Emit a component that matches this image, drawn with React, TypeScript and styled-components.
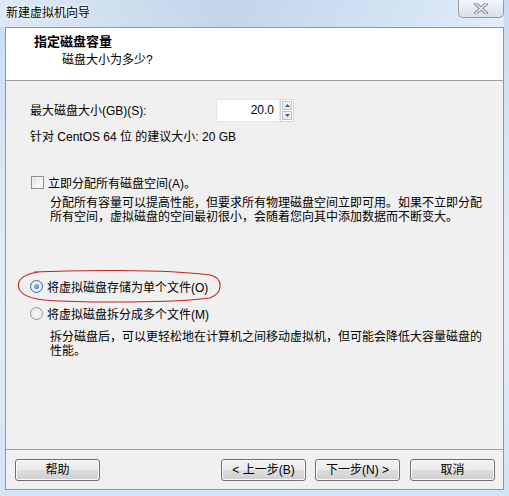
import React from "react";
import styled, { createGlobalStyle } from "styled-components";

const Global = createGlobalStyle`
  html, body { margin: 0; padding: 0; background: #dfeaf5; }
  body { width: 509px; height: 496px; overflow: hidden; font-family: "Liberation Sans", "Noto Sans CJK SC", sans-serif; font-size: 12px; color: #000; }
  * { box-sizing: border-box; }
`;

const Window = styled.div`
  width: 509px;
  height: 496px;
  display: flex;
  flex-direction: column;
  padding: 0 5px 6px 5px;
  background: linear-gradient(180deg, #c8dcf1 0%, #d8e6f4 30%, #e4eef8 60%, #d3e4f4 100%);
`;

const TitleBar = styled.div`
  height: 27px;
  display: flex;
  align-items: flex-start;
  justify-content: space-between;
  flex-shrink: 0;
  margin-left: -5px;
  background: linear-gradient(90deg, rgba(255,255,255,0.35) 0%, rgba(180,190,205,0.25) 45%, rgba(255,255,255,0.2) 80%, rgba(255,255,255,0.45) 100%);
`;

const Title = styled.div`
  padding-left: 6px;
  padding-top: 5px;
  line-height: 16px;
  font-size: 12px;
  color: #000;
  text-shadow: 0 0 6px #ffffff, 0 0 3px #ffffff;
`;

const CloseButton = styled.div`
  width: 46px;
  height: 18px;
  border: 1px solid #8e9bab;
  border-top: none;
  border-radius: 0 0 5px 5px;
  background: linear-gradient(180deg, #f4f7fb 0%, #e3eaf2 50%, #d6e0ea 100%);
  display: flex;
  align-items: center;
  justify-content: center;
`;

const Client = styled.div`
  flex: 1;
  display: flex;
  flex-direction: column;
  border: 1px solid #8b98a8;
  background: #f0f0f0;
  min-height: 0;
`;

const Header = styled.div`
  height: 53px;
  flex-shrink: 0;
  background: #ffffff;
  border-bottom: 1px solid #a0a0a0;
  padding: 6px 0 0 28px;
`;

const HeaderTitle = styled.div`
  font-weight: bold;
  font-size: 13px;
  line-height: 16px;
`;

const HeaderSub = styled.div`
  padding-left: 28px;
  margin-top: 2px;
  line-height: 16px;
`;

const Content = styled.div`
  flex: 1;
  position: relative;
  padding: 18px 0 0 24px;
`;

const SizeRow = styled.div`
  display: flex;
  align-items: center;
  height: 23px;
`;

const SizeLabel = styled.div`
  width: 186px;
  line-height: 14px;
`;

const Spinner = styled.div`
  display: flex;
  height: 23px;
`;

const SpinInput = styled.div`
  width: 64px;
  height: 23px;
  background: #ffffff;
  border: 1px solid #e6e6e6;
  text-align: right;
  padding-right: 5px;
  line-height: 21px;
  font-size: 12px;
`;

const SpinArrows = styled.div`
  width: 14px;
  display: flex;
  flex-direction: column;
  border: 1px solid #d2d6dc;
  background: #ffffff;
  padding: 1px;
  gap: 1px;
`;

const SpinArrow = styled.div`
  flex: 1;
  border: 1px solid #b8c4d2;
  background: linear-gradient(180deg, #f3f6fa, #e2e8f0);
  display: flex;
  align-items: center;
  justify-content: center;
`;

const Text = styled.div<{ $mt?: number }>`
  line-height: 14px;
  margin-top: ${(p) => p.$mt ?? 0}px;
`;

const OptionRow = styled.div<{ $mt: number; $pl?: number }>`
  display: flex;
  align-items: center;
  height: 14px;
  margin-top: ${(p) => p.$mt}px;
  gap: 4px;
  padding-left: ${(p) => p.$pl ?? 0}px;
`;

const CheckBox = styled.div`
  width: 13px;
  height: 13px;
  border: 1px solid #8f8f8f;
  background: linear-gradient(135deg, #dcdcdc 0%, #f4f4f4 60%, #ffffff 100%);
  box-shadow: inset 0 0 0 1px #f4f4f4;
`;

const Radio = styled.div<{ $checked?: boolean }>`
  width: 13px;
  height: 13px;
  border-radius: 50%;
  border: 1px solid ${(p) => (p.$checked ? "#3c6a9c" : "#9a9a9a")};
  background: radial-gradient(circle at 50% 50%, #f8f8f8 0%, #e2e2e2 100%);
  display: flex;
  align-items: center;
  justify-content: center;
`;

const RadioDot = styled.div`
  width: 5px;
  height: 5px;
  border-radius: 50%;
  background: radial-gradient(circle at 40% 40%, #8fd1ff 0%, #1c5fb0 100%);
`;

const Desc = styled.div<{ $mt: number }>`
  margin-top: ${(p) => p.$mt}px;
  padding-left: 20px;
  display: flex;
  flex-direction: column;
`;

const DescLine = styled.div`
  height: 14px;
  line-height: 14px;
  white-space: nowrap;
`;

const Annotation = styled.svg`
  position: absolute;
  left: 8px;
  top: 188px;
  pointer-events: none;
`;

const Footer = styled.div`
  height: 40px;
  flex-shrink: 0;
  border-top: 1px solid #a0a0a0;
  display: flex;
  align-items: center;
  padding: 0 8px 0 9px;
  gap: 9px;
`;

const Spacer = styled.div`
  flex: 1;
`;

const Button = styled.div`
  width: 85px;
  height: 22px;
  border: 1px solid #707070;
  border-radius: 3px;
  background: linear-gradient(180deg, #f2f2f2 0%, #ebebeb 48%, #dddddd 52%, #cfcfcf 100%);
  box-shadow: inset 0 0 0 1px #fbfbfb;
  display: flex;
  align-items: center;
  justify-content: center;
  line-height: 14px;
  font-size: 12px;
`;

const Tri = ({ up }: { up?: boolean }) => (
  <svg width="5" height="3" viewBox="0 0 5 3">
    <path d={up ? "M0 3 L2.5 0 L5 3 Z" : "M0 0 L2.5 3 L5 0 Z"} fill="#4d5a6a" />
  </svg>
);

export default function App() {
  return (
    <>
      <Global />
      <Window>
        <TitleBar>
          <Title>新建虚拟机向导</Title>
          <CloseButton>
            <svg width="14" height="11" viewBox="0 0 14 11">
              <path d="M2 1 L12 10 M12 1 L2 10" stroke="#7d8794" strokeWidth="3.4" strokeLinecap="square" />
              <path d="M2 1 L12 10 M12 1 L2 10" stroke="#f4f6f9" strokeWidth="1.4" strokeLinecap="square" />
            </svg>
          </CloseButton>
        </TitleBar>
        <Client>
          <Header>
            <HeaderTitle>指定磁盘容量</HeaderTitle>
            <HeaderSub>磁盘大小为多少?</HeaderSub>
          </Header>
          <Content>
            <SizeRow>
              <SizeLabel>最大磁盘大小(GB)(S):</SizeLabel>
              <Spinner>
                <SpinInput>20.0</SpinInput>
                <SpinArrows>
                  <SpinArrow><Tri up /></SpinArrow>
                  <SpinArrow><Tri /></SpinArrow>
                </SpinArrows>
              </Spinner>
            </SizeRow>
            <Text $mt={8}>针对 CentOS 64 位 的建议大小: 20 GB</Text>
            <OptionRow $mt={31} $pl={1}>
              <CheckBox />
              <span>立即分配所有磁盘空间(A)。</span>
            </OptionRow>
            <Desc $mt={7}>
              <DescLine>分配所有容量可以提高性能，但要求所有物理磁盘空间立即可用。如果不立即分配</DescLine>
              <DescLine>所有空间，虚拟磁盘的空间最初很小，会随着您向其中添加数据而不断变大。</DescLine>
            </Desc>
            <OptionRow $mt={55}>
              <Radio $checked>
                <RadioDot />
              </Radio>
              <span>将虚拟磁盘存储为单个文件(O)</span>
            </OptionRow>
            <OptionRow $mt={13}>
              <Radio />
              <span>将虚拟磁盘拆分成多个文件(M)</span>
            </OptionRow>
            <Desc $mt={10}>
              <DescLine>拆分磁盘后，可以更轻松地在计算机之间移动虚拟机，但可能会降低大容量磁盘的</DescLine>
              <DescLine>性能。</DescLine>
            </Desc>
            <Annotation width="210" height="36" viewBox="0 0 210 36">
              <path
                d="M20 3 C60 1, 150 0, 196 6 C210 9, 209 24, 196 29 C160 34, 70 34, 30 31 C10 29, 2 22, 5 13 C8 6, 16 4, 26 3"
                fill="none"
                stroke="#c81e1e"
                strokeWidth="1.1"
              />
            </Annotation>
          </Content>
          <Footer>
            <Button>帮助</Button>
            <Spacer />
            <Button>&lt; 上一步(B)</Button>
            <Button>下一步(N) &gt;</Button>
            <Button style={{ marginLeft: 1 }}>取消</Button>
          </Footer>
        </Client>
      </Window>
    </>
  );
}
